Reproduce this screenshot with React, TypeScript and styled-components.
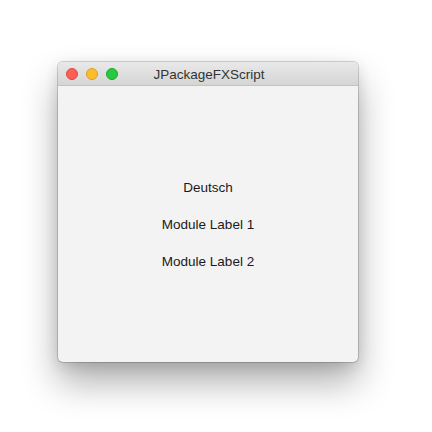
import React from 'react';
import styled, { createGlobalStyle } from 'styled-components';

const GlobalStyle = createGlobalStyle`
    html, body {
        margin: 0;
        padding: 0;
        background: #ffffff;
    }
    body {
        font-family: "Liberation Sans", Arial, sans-serif;
    }
`;

const Page = styled.div`
    width: 432px;
    height: 432px;
    padding: 62px 0 0 58px;
    box-sizing: border-box;
`;

const Window = styled.div`
    width: 300px;
    height: 300px;
    display: flex;
    flex-direction: column;
    border-radius: 5px;
    overflow: hidden;
    background: #f3f3f3;
    box-shadow:
        0 0 0 1px rgba(0, 0, 0, 0.16),
        0 20px 36px rgba(0, 0, 0, 0.32),
        0 4px 14px rgba(0, 0, 0, 0.12);
`;

const TitleBar = styled.div`
    position: relative;
    height: 23px;
    flex-shrink: 0;
    display: flex;
    align-items: center;
    justify-content: center;
    background: linear-gradient(#e9e9e9, #d5d5d5);
    border-bottom: 1px solid #c3c3c3;
`;

const Lights = styled.div`
    position: absolute;
    left: 8px;
    top: 6px;
    display: flex;
    gap: 8px;
`;

const Light = styled.span<{ $fill: string; $edge: string }>`
    width: 12px;
    height: 12px;
    border-radius: 50%;
    box-sizing: border-box;
    background: ${props => props.$fill};
    border: 0.5px solid ${props => props.$edge};
`;

const Title = styled.div`
    font-size: 13.5px;
    color: #333333;
    padding-left: 2px;
    padding-top: 1px;
`;

const Content = styled.div`
    flex: 1;
    display: flex;
    flex-direction: column;
    align-items: center;
    justify-content: center;
    gap: 21px;
    padding-top: 2px;
`;

const Label = styled.div`
    font-size: 13.5px;
    line-height: 16px;
    color: #1a1a1a;
`;

const labels = ['Deutsch', 'Module Label 1', 'Module Label 2'];

const App: React.FC = () => (
    <>
        <GlobalStyle />
        <Page>
            <Window>
                <TitleBar>
                    <Lights>
                        <Light $fill="#fc5f57" $edge="#de4841" />
                        <Light $fill="#fdbc2e" $edge="#dd9e24" />
                        <Light $fill="#28c840" $edge="#1ea830" />
                    </Lights>
                    <Title>JPackageFXScript</Title>
                </TitleBar>
                <Content>
                    {labels.map(text => (
                        <Label key={text}>{text}</Label>
                    ))}
                </Content>
            </Window>
        </Page>
    </>
);

export default App;
